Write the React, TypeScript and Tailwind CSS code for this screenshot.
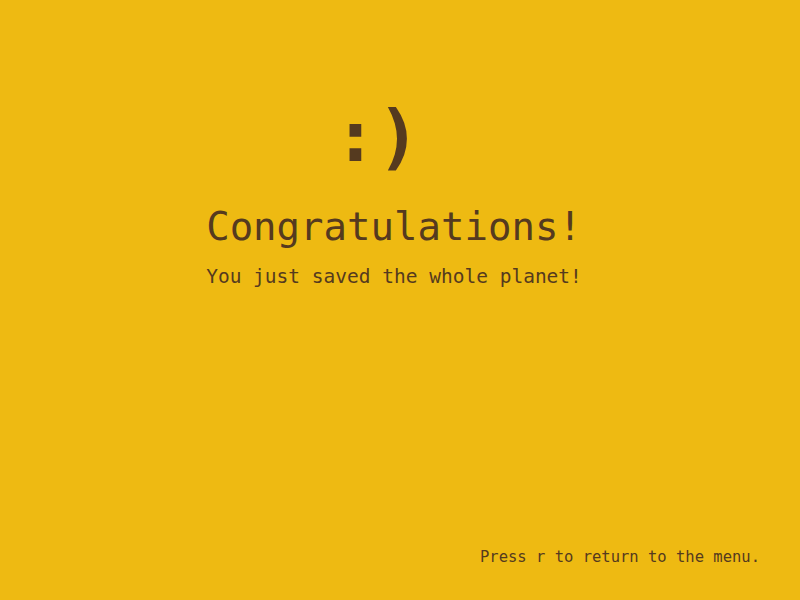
export default function App() {
  return (
    <div
      className="w-[800px] h-[600px] bg-[#eeba12] text-[#553a1f] flex flex-col"
      style={{ fontFamily: '"DejaVu Sans Mono", "Liberation Mono", monospace' }}
    >
      <div className="flex flex-col items-center pr-[12px] pt-[86px]">
        <div className="mr-[34px] text-[72px] leading-[100px] font-bold">:)</div>
        <h1 className="mt-[19px] text-[39px] leading-[44px]">Congratulations!</h1>
        <p className="mt-[16px] text-[19.5px] leading-[24px]">You just saved the whole planet!</p>
      </div>
      <div className="mt-auto flex justify-end pr-[40px] pb-[33px]">
        <p className="text-[15.5px] leading-[20px]">Press r to return to the menu.</p>
      </div>
    </div>
  );
}
